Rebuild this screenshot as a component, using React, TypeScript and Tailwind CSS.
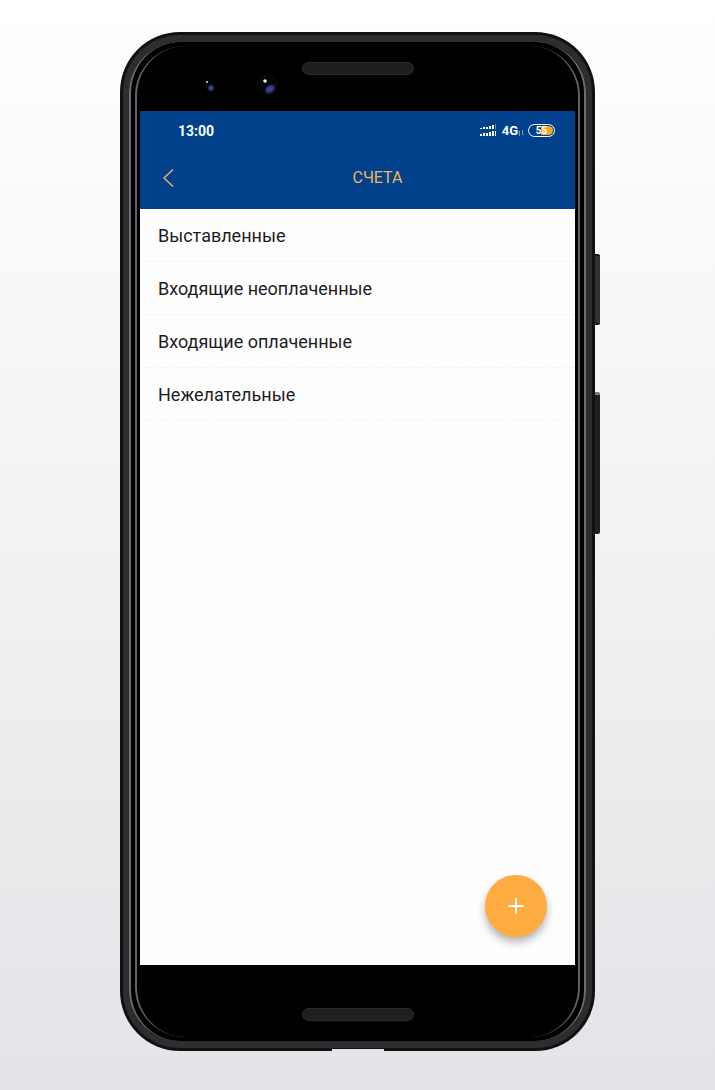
import { Plus } from "lucide-react";

const accounts = [
  "Выставленные",
  "Входящие неоплаченные",
  "Входящие оплаченные",
  "Нежелательные",
];

function SignalIcon() {
  return (
    <svg width="18" height="14" viewBox="0 0 18 14" fill="#fff" aria-hidden="true">
      <rect x="0" y="4" width="2" height="1" />
      <rect x="3" y="3" width="2" height="2" />
      <rect x="6" y="3" width="2" height="2" />
      <rect x="9" y="2" width="2" height="3" />
      <rect x="12" y="1" width="2" height="4" />
      <rect x="15" y="0" width="1" height="5" opacity=".4" />
      <rect x="0" y="10" width="2" height="2" />
      <rect x="3" y="9" width="2" height="3" />
      <rect x="6" y="9" width="2" height="3" />
      <rect x="9" y="8" width="2" height="4" />
      <rect x="12" y="7" width="2" height="5" />
      <rect x="15" y="7" width="1" height="5" />
    </svg>
  );
}

function StatusBar() {
  return (
    <div className="flex h-10 items-center justify-between pr-5 pb-px pl-9.5 text-white">
      <span className="text-sm font-bold">13:00</span>
      <div className="flex items-center">
        <SignalIcon />
        <span className="ml-1 text-[13px] font-bold">4G</span>
        <svg width="6" height="6" viewBox="0 0 6 6" className="mt-1" stroke="#8fb0dc" strokeWidth=".8" fill="none" aria-hidden="true">
          <path d="M1.5 6V1L.5 2M4.5 0v5l1-1" />
        </svg>
        <div className="relative ml-1 flex h-[13px] w-[27px] items-center justify-center rounded-full border border-white">
          <div className="absolute inset-y-px right-px left-3 rounded-r-full bg-[#f7a823]" />
          <span className="relative text-[10px] leading-none font-bold">55</span>
        </div>
      </div>
    </div>
  );
}

function Header() {
  return (
    <header className="bg-[#01418b]">
      <StatusBar />
      <div className="flex h-[58px] items-center pb-1 pl-4">
        <button type="button" aria-label="Назад" className="flex h-8 w-6 items-center justify-center text-[#f0b45c]">
          <svg width="12" height="20" viewBox="0 0 12 20" fill="none" stroke="currentColor" strokeWidth="1.4" aria-hidden="true">
            <path d="M11 1.5 2 10l9 8.5" />
          </svg>
        </button>
        <h1 className="grow text-center text-base text-[#f0b45c]">СЧЕТА</h1>
      </div>
    </header>
  );
}

function Cameras() {
  return (
    <svg width="80" height="24" viewBox="0 0 80 24" aria-hidden="true">
      <defs>
        <radialGradient id="lens">
          <stop offset="0" stopColor="#3f4ba3" />
          <stop offset=".6" stopColor="#2a3276" />
          <stop offset="1" stopColor="#05050c" stopOpacity="0" />
        </radialGradient>
      </defs>
      <circle cx="9" cy="13" r="5" fill="#050509" />
      <ellipse cx="11" cy="15" rx="4" ry="4" fill="url(#lens)" />
      <circle cx="7" cy="9" r="1" fill="#ddd" />
      <circle cx="67" cy="12" r="10" fill="#050508" stroke="#0d0d10" />
      <ellipse cx="70" cy="16" rx="7" ry="5" fill="url(#lens)" transform="rotate(-35 70 16)" />
      <circle cx="65" cy="8" r="1.8" fill="#eee" />
    </svg>
  );
}

function Speaker() {
  return <div className="h-[13px] w-28 rounded-full border border-[#2b2b2c] bg-[#1f1e20]" />;
}

export default function App() {
  return (
    <main className="flex min-h-screen justify-center bg-linear-to-b from-white to-[#e5e3e7] px-4 pt-8 pb-[39px] font-[Roboto,'Noto_Sans',sans-serif]">
      <div className="relative flex w-full max-w-[475px] flex-col rounded-[60px] bg-[#111112] p-[3px]">
        {/* side buttons */}
        <div className="absolute top-[222px] -right-[5px] h-[71px] w-[5px] rounded-r-xs border-y-2 border-[#151515] bg-[#343132]" />
        <div className="absolute top-[360px] -right-[5px] h-[142px] w-[5px] rounded-r-xs border-t-3 border-[#777] bg-[#231f20]" />

        <div className="flex grow flex-col rounded-[57px] bg-[#2d2d2f] px-1.5 py-[7px]">
          <div className="relative flex grow flex-col rounded-[51px] bg-black px-[11px]">
            {/* glass edge highlights */}
            <div className="pointer-events-none absolute inset-0 rounded-[51px] border-x-2 border-[#6d6d70]" />
            <div className="pointer-events-none absolute inset-x-1.5 inset-y-1 rounded-[50px] border-x-2 border-[#626265]" />

            <div className="relative flex h-[69px] shrink-0 justify-center pt-5">
              <Speaker />
              <div className="absolute top-[31px] left-[60px]">
                <Cameras />
              </div>
            </div>

            <div className="relative flex grow flex-col bg-[#fefefe]">
              <Header />
              <nav>
                <ul>
                  {accounts.map((name) => (
                    <li key={name} className="border-b border-dashed border-[#f3f3f4]">
                      <a href="#" className="flex h-[52px] items-center px-[18px] pt-0.5 text-lg text-[#1d1d1f]">
                        {name}
                      </a>
                    </li>
                  ))}
                </ul>
              </nav>
              <button
                type="button"
                aria-label="Добавить счёт"
                className="absolute right-7 bottom-7 flex size-[62px] items-center justify-center rounded-full bg-[#ffad41] text-white shadow-[0_5px_8px_rgba(0,0,0,0.3)]"
              >
                <Plus className="size-6" strokeWidth={2} />
              </button>
            </div>

            <div className="flex h-[76px] shrink-0 justify-center pt-[43px]">
              <Speaker />
            </div>
          </div>
        </div>

        {/* charging port notch */}
        <div className="absolute bottom-0 left-1/2 h-0.5 w-[52px] -translate-x-1/2 bg-[#e6e4e8]" />
      </div>
    </main>
  );
}
